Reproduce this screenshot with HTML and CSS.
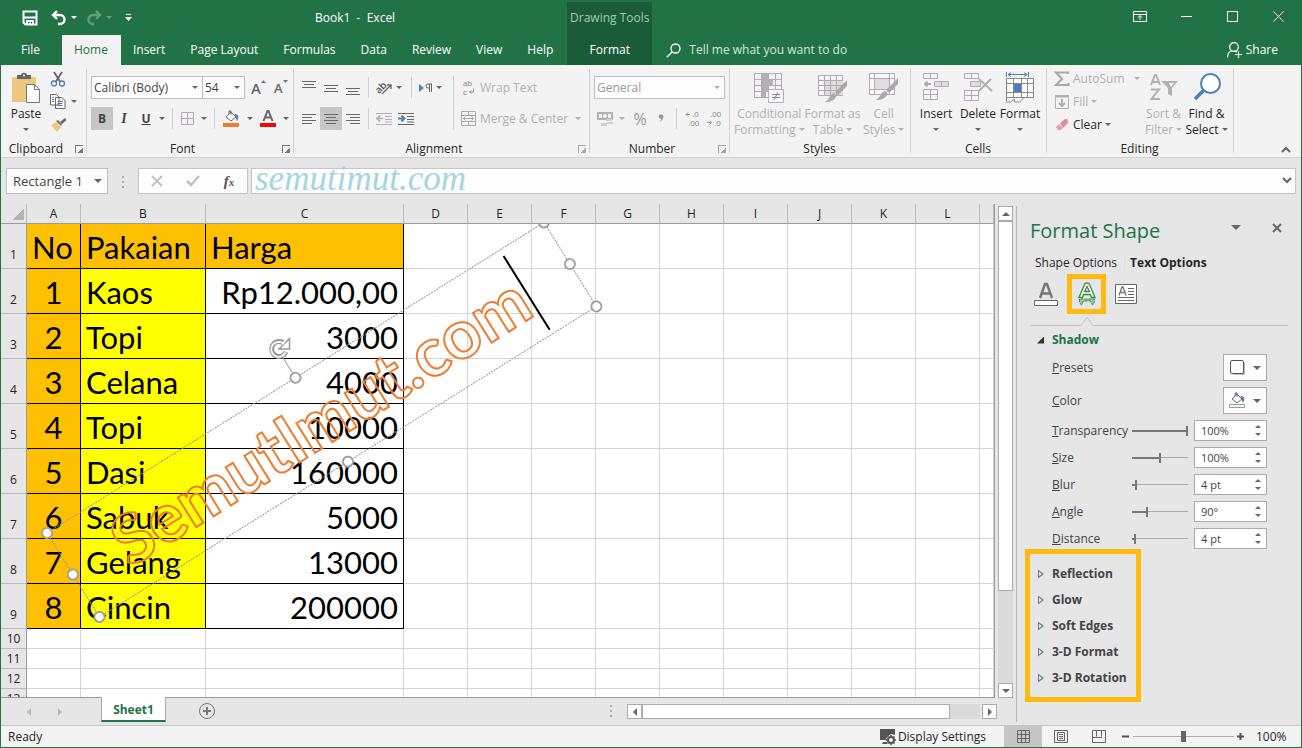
FILE: index.html
```html
<!DOCTYPE html>
<html lang="en">
<head>
  <meta charset="UTF-8" />
  <meta name="viewport" content="width=device-width, initial-scale=1.0" />
  <title>Book1 - Excel</title>
  <link rel="stylesheet" href="styles.css">
</head>
<body>
<div class="app">

  <!-- Title bar and ribbon tabs -->
  <header class="top">
    <div class="quick">
      <button aria-label="Save"><svg width="16" height="16"><path d="M1.500 1.500h13v13h-11l-2-2z" fill="none" stroke="#fff" stroke-width="2"/><path d="M1 7.500h14M5 15v-4h6v4M8 12.500v2.500" fill="none" stroke="#fff" stroke-width="2"/></svg></button>
      <button class="undo" aria-label="Undo"><svg width="16" height="16"><path d="M6 1L2 5l4 4M2.500 5H9a4.500 4.500 0 0 1 0 9H7" fill="none" stroke="#fff" stroke-width="2.400"/></svg><i class="caret"></i></button>
      <button class="redo" aria-label="Redo"><svg width="16" height="16"><path d="M10 1l4 4-4 4M13.500 5H7a4.500 4.500 0 0 0 0 9h1" fill="none" stroke="#fff" stroke-width="2.400"/></svg><i class="caret"></i></button>
      <button aria-label="Customize toolbar"><svg width="7" height="8"><path d="M1 .5h5" stroke="#fff"/><path d="M0 3h7L3.500 7z" fill="#fff"/></svg></button>
    </div>
    <div class="title">Book1&nbsp; -&nbsp; Excel</div>
    <div class="window-buttons">
      <button aria-label="Ribbon display"><svg width="14" height="11"><path d="M.5.5h13v10H.5zM.5 3.500h13M7 9V5M5 6.500l2-2 2 2" fill="none" stroke="#fff"/></svg></button>
      <button aria-label="Minimize"><svg width="11" height="11"><path d="M0 5.500h11" stroke="#fff"/></svg></button>
      <button aria-label="Maximize"><svg width="11" height="11"><path d="M.5.5h10v10H.5z" fill="none" stroke="#fff"/></svg></button>
      <button aria-label="Close"><svg width="11" height="11"><path d="M.5.5l10 10M10.500.5l-10 10" stroke="#fff"/></svg></button>
    </div>
    <nav class="tabs">
      <a href="#" class="file">File</a>
      <a href="#" class="active">Home</a>
      <a href="#">Insert</a>
      <a href="#">Page Layout</a>
      <a href="#">Formulas</a>
      <a href="#">Data</a>
      <a href="#">Review</a>
      <a href="#">View</a>
      <a href="#">Help</a>
    </nav>
    <div class="context">
      <span>Drawing Tools</span>
      <a href="#">Format</a>
    </div>
    <button class="tell"><svg width="15" height="15"><circle cx="9.500" cy="5.500" r="4.500" fill="none" stroke="#fff" stroke-width="1.300"/><path d="M6.500 8.500L.8 14.200" stroke="#fff" stroke-width="1.300"/></svg>Tell me what you want to do</button>
    <button class="share"><svg width="15" height="16"><circle cx="7" cy="5" r="4.300" fill="none" stroke="#fff" stroke-width="1.200"/><path d="M.6 15.500c0-4 2-6.500 5-6.500M7 9c1 0 2 .3 3 1M11.500 9v7M8 12.500h7" fill="none" stroke="#fff" stroke-width="1.200"/></svg>Share</button>
  </header>

  <!-- Ribbon -->
  <section class="ribbon">
    <div class="group clipboard">
      <div class="tools big-row">
        <button class="big"><svg width="30" height="32"><path d="M1 5h24v25H1z" fill="#eec77e"/><path d="M6 3h4c0-3 6-3 6 0h4v4H6z" fill="#666"/><circle cx="13" cy="3.500" r="1" fill="#fff"/><path d="M15.500 12.500h8l5 5v13h-13z" fill="#fff" stroke="#777"/><path d="M23.500 12.500v5h5" fill="none" stroke="#777"/></svg><span>Paste</span><i class="caret"></i></button>
        <div class="stack">
          <button aria-label="Cut"><svg width="16" height="16"><path d="M4 1l6 9.500M12 1L6 10.500" stroke="#666" stroke-width="1.800"/><circle cx="4" cy="12.500" r="2.500" fill="none" stroke="#4a80bd" stroke-width="1.300"/><circle cx="12" cy="12.500" r="2.500" fill="none" stroke="#4a80bd" stroke-width="1.300"/></svg></button>
          <button aria-label="Copy"><svg width="16" height="15"><path d="M.5.5h6l2.500 2.500v8H.5zM5.500 3.500h6l3.500 3v8H5.500z" fill="#fff" stroke="#666"/><path d="M2 3.500h2M2 5.500h2M2 7.500h2M7.500 7.500h5M7.500 9.500h5M7.500 11.500h5" stroke="#4a80bd"/></svg><i class="caret"></i></button>
          <button aria-label="Format Painter"><svg width="17" height="15"><path d="M1 8l5-3 5 5-4 5z" fill="#eec77e"/><path d="M6 4l2-1 4 4-1 2z" fill="#777"/><path d="M10 5l5-4 1.500 2L12 7z" fill="#666"/></svg></button>
        </div>
      </div>
      <div class="name">Clipboard<button class="launch" aria-label="Clipboard options"></button></div>
    </div>

    <div class="group font">
      <div class="tools">
        <div class="row">
          <label class="drop font-name"><select aria-label="Font"><option>Calibri (Body)</option></select></label>
          <label class="drop font-size"><select aria-label="Font size"><option>54</option></select></label>
          <button class="letter grow" aria-label="Increase font size">A<svg width="5" height="3"><path d="M0 3l2.500-3L5 3z" fill="#4a80bd"/></svg></button>
          <button class="letter shrink" aria-label="Decrease font size">A<svg width="5" height="3"><path d="M0 0h5L2.500 3z" fill="#4a80bd"/></svg></button>
        </div>
        <div class="row">
          <button class="sq on"><b>B</b></button>
          <button class="sq italic"><i>I</i></button>
          <button class="sq"><u>U</u></button>
          <i class="caret"></i>
          <span class="sep"></span>
          <button class="ico" aria-label="Borders"><svg width="13" height="13"><path d="M.5.5h12v12H.5zM6.500 0v13M0 6.500h13" fill="none" stroke="#b3aab3"/></svg></button>
          <i class="caret"></i>
          <span class="sep"></span>
          <button class="ico" aria-label="Fill color"><svg width="17" height="17"><path d="M3 7l5-5 5 5-5 4z" fill="#fff" stroke="#666"/><path d="M6 4V1h2v4" fill="none" stroke="#666"/><path d="M12 4c4 0 4 4 2 7-1-2-1-4-2-5z" fill="#4a80bd"/><path d="M0 13h16v4H0z" fill="#ed7d31"/></svg></button>
          <i class="caret"></i>
          <button class="ico" aria-label="Font color"><svg width="16" height="17"><path d="M3.500 11L7.500 1h1L12.500 11M5 7.500h6" fill="none" stroke="#666" stroke-width="2"/><path d="M0 13h16v4H0z" fill="#f00"/></svg></button>
          <i class="caret"></i>
        </div>
      </div>
      <div class="name">Font<button class="launch" aria-label="Font options"></button></div>
    </div>

    <div class="group alignment">
      <div class="tools split">
        <div class="half">
          <div class="row">
            <button class="sq" aria-label="Top align"><svg width="14" height="14"><path d="M0 .5h14M2 3.500h10M0 6.500h14" stroke="#666"/></svg></button>
            <button class="sq" aria-label="Middle align"><svg width="14" height="14"><path d="M0 4.500h14M2 7.500h10M0 10.500h14" stroke="#666"/></svg></button>
            <button class="sq" aria-label="Bottom align"><svg width="14" height="14"><path d="M0 7.500h14M2 10.500h10M0 13.500h14" stroke="#666"/></svg></button>
            <span class="sep"></span>
            <button class="ico orient" aria-label="Orientation"><svg width="17" height="15"><text x="-1" y="11" transform="rotate(-45 5 8)">ab</text><path d="M6 14L15 5M11 5h4v4" fill="none" stroke="#666" stroke-width="1.300"/></svg></button>
            <i class="caret"></i>
            <span class="sep"></span>
            <button class="ico" aria-label="Text direction"><svg width="14" height="10"><path d="M0 1l5 4-5 4z" fill="#4a80bd"/><path d="M13 1H9a2 2 0 0 0 0 4h1M10.500 1v8M12.500 1v8" fill="none" stroke="#666"/></svg></button>
            <i class="caret"></i>
          </div>
          <div class="row">
            <button class="sq" aria-label="Align left"><svg width="14" height="14"><path d="M0 2.500h14M0 5.500h10M0 8.500h14M0 11.500h10" stroke="#666"/></svg></button>
            <button class="sq on" aria-label="Center"><svg width="14" height="14"><path d="M0 2.500h14M2 5.500h10M0 8.500h14M2 11.500h10" stroke="#666"/></svg></button>
            <button class="sq" aria-label="Align right"><svg width="14" height="14"><path d="M0 2.500h14M4 5.500h10M0 8.500h14M4 11.500h10" stroke="#666"/></svg></button>
            <span class="sep"></span>
            <button class="ico" aria-label="Decrease indent"><svg width="16" height="14"><path d="M0 1.500h16M9 4.500h7M9 7.500h7M0 12.500h16M9 10h7" stroke="#b1b1b1"/><path d="M7 6.500H1M4 3.500l-3 3 3 3" fill="none" stroke="#b1b1b1" stroke-width="1.600"/></svg></button>
            <button class="ico" aria-label="Increase indent"><svg width="16" height="14"><path d="M0 1.500h16M9 4.500h7M9 7.500h7M0 12.500h16M9 10h7" stroke="#666"/><path d="M0 6.500h6M3.500 3.500l3 3-3 3" fill="none" stroke="#4a80bd" stroke-width="1.800"/></svg></button>
          </div>
        </div>
        <span class="sep tall"></span>
        <div class="half off">
          <div class="row"><button class="line"><svg width="15" height="17" class="small-text"><text x="2" y="7" class="wrap">ab</text><text x="2" y="16" class="wrap">c</text><path d="M12.500 9.500v3.500H8.500M10.500 11.500l-2 1.500 2 1.500" fill="none" stroke="#999"/></svg>Wrap Text</button></div>
          <div class="row"><button class="line"><svg width="15" height="15"><path d="M.5.5h14v14H.5zM0 4.500h15M0 10.500h15M7.500 0v4M7.500 11v4M2 7.500h11M4.500 5.500l-2 2 2 2M10.500 5.500l2 2-2 2" fill="none" stroke="#aaa"/></svg>Merge &amp; Center</button><i class="caret"></i></div>
        </div>
      </div>
      <div class="name">Alignment<button class="launch faint" aria-label="Alignment options"></button></div>
    </div>

    <div class="group number">
      <div class="tools off">
        <div class="row"><label class="drop format"><select aria-label="Number format"><option>General</option></select></label></div>
        <div class="row">
          <button class="ico" aria-label="Accounting format"><svg width="17" height="16"><path d="M0 1h16v8H0z" fill="#b1b1b1"/><path d="M2 3h3v4H2zM11 3h3v4h-3z" fill="#f3f3f3"/><circle cx="8" cy="5" r="2" fill="#f3f3f3"/><path d="M9 8h6v2H9zM10 11h6v2h-6zM4 12h6v3H4z" fill="#d0d0d0"/></svg></button>
          <i class="caret"></i>
          <button class="sign">%</button>
          <button class="sign comma" aria-label="Comma style"><svg width="6" height="9"><circle cx="3" cy="2.500" r="2.300" fill="#999"/><path d="M5.300 2c0 3-1 5-4 6 1-1 2-2 2-4z" fill="#999"/></svg></button>
          <span class="sep"></span>
          <button class="dec" aria-label="Increase decimal"><svg width="16" height="15" class="small-text"><path d="M5 3.500H1M3 1.500l-2 2 2 2" fill="none" stroke="#999"/><text x="7" y="6">.0</text><text x="3" y="15">.00</text></svg></button>
          <button class="dec" aria-label="Decrease decimal"><svg width="16" height="15" class="small-text"><text x="3" y="6">.00</text><path d="M0 11.500h4M2.500 9.500l2 2-2 2" fill="none" stroke="#999"/><text x="7" y="15">.0</text></svg></button>
        </div>
      </div>
      <div class="name">Number<button class="launch faint" aria-label="Number options"></button></div>
    </div>

    <div class="group styles">
      <div class="tools big-row off">
        <button class="big"><svg width="30" height="32"><path d="M.5 1.500h27v24H.5zM0 7.500h28M0 13.500h28M0 19.500h28M7.500 1v25M14.500 1v25M21.500 1v25" fill="none" stroke="#b3aab3"/><path d="M8 2h6v5H8zM8 8h11v5H8zM8 14h6v5H8zM8 20h4v5H8z" fill="#b1b1b1"/><path d="M14.500 17.500h15v13h-15z" fill="#fdf8fd" stroke="#b1b1b1"/><path d="M18 22.500h8M18 25.500h8M24 20l-4 8" stroke="#888"/></svg><span>Conditional<br>Formatting<i class="caret"></i></span></button>
        <button class="big"><svg width="30" height="32"><path d="M.5 3.500h24v20H.5z" fill="#faf5fa" stroke="#b3aab3"/><path d="M7 8h18v15H7z" fill="#ddd"/><path d="M0 8.500h25M0 13.500h25M0 18.500h25M6.500 3v20M12.500 3v20M18.500 3v20" fill="none" stroke="#b3aab3"/><path d="M29 8v6l-9 9-3-3zM16 21c4 1 3 9-9 9 4-2 5-8 9-9z" fill="#aaa"/></svg><span>Format as<br>Table<i class="caret"></i></span></button>
        <button class="big"><svg width="30" height="32"><path d="M.5 1.500h25v21H.5z" fill="#faf5fa" stroke="#b3aab3"/><path d="M6 7h15v10H6z" fill="#ddd"/><path d="M0 6.500h25M0 17.500h25M5.500 1v21M20.500 1v21" fill="none" stroke="#b3aab3"/><path d="M29 6v6l-9 9-3-3zM16 19c4 1 3 9-9 9 4-2 5-8 9-9z" fill="#aaa"/></svg><span>Cell<br>Styles<i class="caret"></i></span></button>
      </div>
      <div class="name">Styles</div>
    </div>

    <div class="group cells">
      <div class="tools big-row">
        <button class="big"><svg width="28" height="32"><path d="M1.500 1.500h14v5h-14zM8.500 1v5M1.500 17.500h14v10h-14zM8.500 17v10M1 22.500h14" fill="#f8f3f8" stroke="#b3aab3"/><path d="M12.500 9.500h14v5h-14zM19.500 9v5" fill="#ddd" stroke="#b3aab3"/><path d="M9 12H3M5.500 9.500L3 12l2.500 2.500" fill="none" stroke="#aaa" stroke-width="1.800"/></svg><span>Insert</span><i class="caret"></i></button>
        <button class="big"><svg width="32" height="32"><path d="M2.500 1.500h14v5h-14zM9.500 1v5M2.500 18.500h14v10h-14zM9.500 18v10M2 23.500h14" fill="#f8f3f8" stroke="#b3aab3"/><path d="M8.500 9.500h10v5h-10z" fill="#ddd" stroke="#b3aab3"/><path d="M17 7l13 12M29 7L17 19" stroke="#b1b1b1" stroke-width="2"/></svg><span>Delete</span><i class="caret"></i></button>
        <button class="big"><svg width="30" height="32"><path d="M1.500 0v5M23.500 0v5M3 2.500h19M6 .5l-3 2 3 2M19 .5l3 2-3 2" fill="none" stroke="#4a80bd"/><path d="M1.500 6.500h27v19h-27zM1.500 25v5h4l4-3v3h5l4-4M1 11.500h27M1 20.500h27M8.500 6v19M16.500 6v19M22.500 6v19" fill="#fff" stroke="#888"/><path d="M9 12h7v8H9z" fill="#4a80bd"/></svg><span>Format</span><i class="caret"></i></button>
      </div>
      <div class="name">Cells</div>
    </div>

    <div class="group editing">
      <div class="tools big-row">
        <div class="stack wide">
          <button class="off"><svg width="16" height="16"><path d="M14 3V1.500H2L8 8l-6 6h12.500V12" fill="none" stroke="#aaa" stroke-width="2.200"/></svg>AutoSum<i class="caret far"></i></button>
          <button class="off"><svg width="16" height="16"><path d="M1.500 1.500h13v13h-13z" fill="none" stroke="#b1b1b1"/><path d="M1 2.500h14" stroke="#b1b1b1" stroke-width="2"/><path d="M8 5v7M5 9l3 3 3-3" fill="none" stroke="#aaa" stroke-width="1.800"/></svg>Fill<i class="caret"></i></button>
          <button><svg width="16" height="16"><path d="M6 6l5-4h2l1 3v1L9 11z" fill="#e78898"/><path d="M5 7l4 4-2 2-3 .5L2 10z" fill="#ec9dab"/></svg>Clear<i class="caret"></i></button>
        </div>
        <button class="big off"><svg width="30" height="32"><path d="M2 13L6 3h1l4 10M3.500 10h6M2 17.500h8L2.500 27H11" fill="none" stroke="#b1b1b1" stroke-width="2"/><path d="M12 9h17l-6 7v8l-4-2v-6z" fill="#b1b1b1"/><path d="M20 11h5l-3 4z" fill="#f3f3f3"/></svg><span>Sort &amp;<br>Filter<i class="caret"></i></span></button>
        <button class="big"><svg width="28" height="32"><circle cx="17.500" cy="11.500" r="9.500" fill="#fff" stroke="#4a80bd" stroke-width="2"/><path d="M10.500 18.500L2 27" stroke="#4a80bd" stroke-width="3.500"/></svg><span>Find &amp;<br>Select<i class="caret"></i></span></button>
      </div>
      <div class="name">Editing</div>
    </div>
    <button class="collapse" aria-label="Collapse ribbon"><svg width="10" height="7"><path d="M1 6l4-4 4 4" fill="none" stroke="#666" stroke-width="2"/></svg></button>
  </section>

  <!-- Formula bar -->
  <section class="formula">
    <label class="drop name-box"><select aria-label="Name box"><option>Rectangle 1</option></select></label>
    <span class="dots"></span>
    <div class="fx">
      <button aria-label="Cancel"><svg width="12" height="12"><path d="M1 1l10 10M11 1L1 11" stroke="#c0c0c0" stroke-width="1.800"/></svg></button>
      <button aria-label="Enter"><svg width="14" height="12"><path d="M1 6l4 4 8-9" fill="none" stroke="#c0c0c0" stroke-width="2.500"/></svg></button>
      <button class="fn"><i>f<small>x</small></i></button>
    </div>
    <div class="entry">
      <input type="text" aria-label="Formula bar">
      <span class="watermark">semutimut.com</span>
      <svg width="10" height="8"><path d="M1 1l4 4 4-4" fill="none" stroke="#666" stroke-width="2.200"/></svg>
    </div>
  </section>

  <main class="work">
    <div class="book">
      <div class="sheet-row">
        <div class="sheet">
          <table>
            <colgroup><col class="c-head"><col class="c-a"><col class="c-b"><col class="c-c"><col class="c-std"><col class="c-std"><col class="c-std"><col class="c-std"><col class="c-std"><col class="c-std"><col class="c-std"><col class="c-std"><col class="c-std"><col></colgroup>
            <thead>
              <tr><th class="corner"></th><th>A</th><th>B</th><th>C</th><th>D</th><th>E</th><th>F</th><th>G</th><th>H</th><th>I</th><th>J</th><th>K</th><th>L</th><th></th></tr>
            </thead>
            <tbody>
              <tr class="data head"><th>1</th><td>No</td><td>Pakaian</td><td>Harga</td><td></td><td></td><td></td><td></td><td></td><td></td><td></td><td></td><td></td><td></td></tr>
              <tr class="data"><th>2</th><td>1</td><td>Kaos</td><td>Rp12.000,00</td><td></td><td></td><td></td><td></td><td></td><td></td><td></td><td></td><td></td><td></td></tr>
              <tr class="data"><th>3</th><td>2</td><td>Topi</td><td>3000</td><td></td><td></td><td></td><td></td><td></td><td></td><td></td><td></td><td></td><td></td></tr>
              <tr class="data"><th>4</th><td>3</td><td>Celana</td><td>4000</td><td></td><td></td><td></td><td></td><td></td><td></td><td></td><td></td><td></td><td></td></tr>
              <tr class="data"><th>5</th><td>4</td><td>Topi</td><td>10000</td><td></td><td></td><td></td><td></td><td></td><td></td><td></td><td></td><td></td><td></td></tr>
              <tr class="data"><th>6</th><td>5</td><td>Dasi</td><td>160000</td><td></td><td></td><td></td><td></td><td></td><td></td><td></td><td></td><td></td><td></td></tr>
              <tr class="data"><th>7</th><td>6</td><td>Sabuk</td><td>5000</td><td></td><td></td><td></td><td></td><td></td><td></td><td></td><td></td><td></td><td></td></tr>
              <tr class="data"><th>8</th><td>7</td><td>Gelang</td><td>13000</td><td></td><td></td><td></td><td></td><td></td><td></td><td></td><td></td><td></td><td></td></tr>
              <tr class="data"><th>9</th><td>8</td><td>Cincin</td><td>200000</td><td></td><td></td><td></td><td></td><td></td><td></td><td></td><td></td><td></td><td></td></tr>
              <tr><th>10</th><td></td><td></td><td></td><td></td><td></td><td></td><td></td><td></td><td></td><td></td><td></td><td></td><td></td></tr>
              <tr><th>11</th><td></td><td></td><td></td><td></td><td></td><td></td><td></td><td></td><td></td><td></td><td></td><td></td><td></td></tr>
              <tr><th>12</th><td></td><td></td><td></td><td></td><td></td><td></td><td></td><td></td><td></td><td></td><td></td><td></td><td></td></tr>
              <tr><th>13</th><td></td><td></td><td></td><td></td><td></td><td></td><td></td><td></td><td></td><td></td><td></td><td></td><td></td></tr>
            </tbody>
          </table>

          <!-- Rotated text box with its handles -->
          <svg class="shape" width="600" height="420">
            <g transform="translate(20 309) rotate(-32)">
              <rect x="0" y="0" width="586" height="99" class="outline"/>
              <text x="52" y="74">SemutImut.com</text>
              <path d="M534 7v87" stroke="#000" stroke-width="2"/>
              <path d="M293 0v-26" stroke="#a0a0a0"/>
              <g class="handles">
                <circle cx="0" cy="0" r="5"/><circle cx="293" cy="0" r="5"/><circle cx="586" cy="0" r="5"/>
                <circle cx="0" cy="49" r="5"/><circle cx="586" cy="49" r="5"/>
                <circle cx="0" cy="99" r="5"/><circle cx="293" cy="99" r="5"/><circle cx="586" cy="99" r="5"/>
              </g>
            </g>
            <path d="M259 128A7.500 7.500 0 1 1 256 118.500" fill="none" stroke="#999" stroke-width="5"/>
            <path d="M262.500 114.500v10.500h-10.500z" fill="#fff" stroke="#999" stroke-width="1.500"/>
            <path d="M258.500 128.500A7.500 7.500 0 1 1 257 120" fill="none" stroke="#fff" stroke-width="1.800"/>
          </svg>
        </div>
        <div class="vscroll">
          <button aria-label="Scroll up"><i class="tri up"></i></button>
          <div class="track"><div class="thumb"></div></div>
          <button aria-label="Scroll down"><i class="tri down"></i></button>
        </div>
      </div>
      <div class="sheet-tabs">
        <div class="arrows"><button aria-label="Previous sheet"><i class="tri left"></i></button><button aria-label="Next sheet"><i class="tri right"></i></button></div>
        <a href="#" class="sheet-tab">Sheet1</a>
        <button class="add" aria-label="New sheet"><svg width="16" height="16"><circle cx="8" cy="8" r="7.500" fill="none" stroke="#777"/><path d="M8 4v8M4 8h8" stroke="#777" stroke-width="2"/></svg></button>
        <span class="dots"></span>
        <div class="hscroll">
          <button aria-label="Scroll left"><i class="tri left"></i></button>
          <div class="track"><div class="thumb"></div></div>
          <button aria-label="Scroll right"><i class="tri right"></i></button>
        </div>
      </div>
    </div>

    <!-- Format Shape pane -->
    <aside class="pane">
      <div class="pane-title">
        <h2>Format Shape</h2>
        <button aria-label="Pane options"><i class="tri down wide-tri"></i></button>
        <button aria-label="Close pane"><svg width="10" height="10"><path d="M1 1l8 8M9 1L1 9" stroke="#666" stroke-width="2"/></svg></button>
      </div>
      <div class="pane-tabs"><a href="#">Shape Options</a><a href="#" class="active">Text Options</a></div>
      <div class="pane-icons">
        <button aria-label="Text fill and outline"><svg width="24" height="24"><path d="M6 16l5-14h2l5 14M8 11.500h8" fill="none" stroke="#777" stroke-width="2.400"/><path d="M.5 18.500h23v5H.5z" fill="#fff" stroke="#666"/></svg></button>
        <button class="marked" aria-label="Text effects"><svg width="18" height="24"><path d="M1 15.500L6.500 2.500q.5-1.500 2.500-1.500t2.500 1.500L17 15.500h-3.500l-1-3h-7l-1 3zM6.500 9.500h5L9 4.500z" fill="#fff" stroke="#3b8a3f" stroke-width="1.300"/><path d="M1.500 17c0 3 0 4 2 6l2-4h7l2 4c2-2 2-3 2-6z" fill="#9ec79f" stroke="#3b8a3f" stroke-dasharray="3 1"/></svg></button>
        <button aria-label="Text box"><svg width="22" height="20"><path d="M.5.5h21v19H.5z" fill="#fff" stroke="#666"/><path d="M4 11.500L7 3h1l3 8.500M5 8.500h5" fill="none" stroke="#777" stroke-width="1.400"/><path d="M13 4.500h6M13 7.500h6M13 10.500h6M3 13.500h16M3 16.500h16" stroke="#666"/></svg></button>
      </div>
      <svg class="notch" width="100%" height="10"><path d="M0 9.500h51l6-8 6 8h195" fill="none" stroke="#c3c3c3"/></svg>
      <button class="section open"><i></i>Shadow</button>
      <div class="fields">
        <div class="pick"><span><u>P</u>resets</span><button aria-label="Presets"><svg width="18" height="18"><path d="M4 4h12v12H4z" fill="#bbb"/><rect x="1.500" y="1.500" width="13" height="13" rx="1.500" fill="#fff" stroke="#555"/></svg><i class="caret"></i></button></div>
        <div class="pick"><span><u>C</u>olor</span><button aria-label="Color"><svg width="18" height="17"><path d="M3 7l5-5 5 5-5 4z" fill="#fff" stroke="#666"/><path d="M6 4V1h2v4" fill="none" stroke="#666"/><path d="M12 4c4 0 4 4 2 7-1-2-1-4-2-5z" fill="#4a80bd"/><path d="M.5 12.500h15v3H.5z" fill="#fff" stroke="#999"/></svg><i class="caret"></i></button></div>
        <div class="field"><label for="transparency"><u>T</u>ransparency</label><input type="range" aria-label="Transparency slider" value="100" style="--v: 100%"><span class="spin"><input id="transparency" type="text" value="100%"><i class="tri up"></i><i class="tri down"></i></span></div>
        <div class="field"><label for="size"><u>S</u>ize</label><input type="range" aria-label="Size slider" value="50" style="--v: 50%"><span class="spin"><input id="size" type="text" value="100%"><i class="tri up"></i><i class="tri down"></i></span></div>
        <div class="field"><label for="blur"><u>B</u>lur</label><input type="range" aria-label="Blur slider" value="5" style="--v: 5%"><span class="spin"><input id="blur" type="text" value="4 pt"><i class="tri up"></i><i class="tri down"></i></span></div>
        <div class="field"><label for="angle"><u>A</u>ngle</label><input type="range" aria-label="Angle slider" value="26" style="--v: 26%"><span class="spin"><input id="angle" type="text" value="90°"><i class="tri up"></i><i class="tri down"></i></span></div>
        <div class="field"><label for="distance"><u>D</u>istance</label><input type="range" aria-label="Distance slider" value="4" style="--v: 4%"><span class="spin"><input id="distance" type="text" value="4 pt"><i class="tri up"></i><i class="tri down"></i></span></div>
      </div>
      <div class="more">
        <button class="section"><i></i>Reflection</button>
        <button class="section"><i></i>Glow</button>
        <button class="section"><i></i>Soft Edges</button>
        <button class="section"><i></i>3-D Format</button>
        <button class="section"><i></i>3-D Rotation</button>
      </div>
    </aside>
  </main>

  <!-- Status bar -->
  <footer class="status">
    <span class="ready">Ready</span>
    <button class="display"><svg width="16" height="16"><path d="M0 0h15v6l-4-1-4 3-1 3H0zM3 13h4v2H2z" fill="#555"/><circle cx="11" cy="11" r="3" fill="none" stroke="#555" stroke-width="2"/><path d="M11 6v2M11 14v2M6 11h2M14 11h2M7.500 7.500l1.500 1.500M13 13l1.500 1.500M14.500 7.500L13 9M9 13l-1.500 1.500" stroke="#555" stroke-width="1.500"/></svg>Display Settings</button>
    <button class="view on" aria-label="Normal"><svg width="13" height="13"><path d="M.5.5h12v12H.5zM0 4.500h13M0 8.500h13M4.500 0v13M8.500 0v13" fill="none" stroke="#666"/></svg></button>
    <button class="view" aria-label="Page layout"><svg width="14" height="13"><path d="M.5.5h13v12H.5zM3.500 2.500h7v8h-7zM5 4.500h4M5 6.500h4M5 8.500h4" fill="none" stroke="#666"/></svg></button>
    <button class="view" aria-label="Page break preview"><svg width="14" height="13"><path d="M.5.5h13v12H.5zM4.500 0v6.500M9.500 0v6.500M0 7.500h10" fill="none" stroke="#666"/></svg></button>
    <button class="zoom-button" aria-label="Zoom out"><svg width="7" height="7"><path d="M0 3.500h7" stroke="#555" stroke-width="2"/></svg></button>
    <input class="zoom" type="range" value="50" aria-label="Zoom">
    <button class="zoom-button" aria-label="Zoom in"><svg width="7" height="7"><path d="M0 3.500h7M3.500 0v7" stroke="#555" stroke-width="2"/></svg></button>
    <span class="percent">100%</span>
  </footer>
</div>
</body>
</html>
```

FILE: styles.css
```css
:root {
  --green: #217346;
  --dark-green: #1b5c38;
  --gray: #e6e6e6;
  --light: #f3f3f3;
  --line: #c6c6c6;
  --mark: #ffb90f;
}

* {
  margin: 0;
  padding: 0;
  box-sizing: border-box;
}

body {
  font: 12px/16px "Open Sans", "Noto Sans", sans-serif;
  color: #262626;
}

button {
  display: flex;
  align-items: center;
  justify-content: center;
  font: inherit;
  color: inherit;
  background: none;
  border: none;
}

select, input {
  font: inherit;
  color: inherit;
  border: none;
  background: none;
  appearance: none;
}

a {
  color: inherit;
  text-decoration: none;
}

svg {
  display: block;
  flex: none;
}

.app {
  display: flex;
  flex-direction: column;
  height: 100vh;
  overflow: hidden;
  border: 1px solid var(--green);
  border-top: none;
  background: var(--gray);
}

/* small triangles */
.caret {
  flex: none;
  border: 3px solid transparent;
  border-top-color: #666;
  border-bottom: none;
}

.tri {
  flex: none;
  border: 4px solid transparent;
}

.tri.up {
  border-top: none;
  border-bottom-color: #666;
}

.tri.down {
  border-bottom: none;
  border-top-color: #666;
}

.tri.left {
  border-left: none;
  border-right-color: #666;
}

.tri.right {
  border-right: none;
  border-left-color: #666;
}

.tri.wide-tri {
  border-width: 5px 5px 0;
}

.off {
  color: #b1b1b1;
}

.off .caret {
  border-top-color: #b1b1b1;
}

/* === TITLE BAR === */
.top {
  display: grid;
  grid-template-columns: auto auto 1fr auto;
  grid-template-rows: 35px 30px;
  position: relative;
  background: var(--green);
  color: #fff;
}

.quick {
  grid-area: 1 / 1;
  display: flex;
  align-items: center;
  padding-left: 21px;
}

.quick .caret {
  border-top-color: #fff;
  margin-left: 4px;
}

.quick .undo {
  margin: 0 9px 0 13px;
}

.quick .redo {
  margin-right: 13px;
  opacity: 0.3;
}

.title {
  position: absolute;
  top: 10px;
  left: 314px;
}

.window-buttons {
  grid-area: 1 / 4;
  display: flex;
}

.window-buttons button {
  width: 46px;
  height: 32px;
}

.tabs {
  grid-area: 2 / 1;
  display: flex;
}

.tabs a {
  padding: 7px 13px 7px 12px;
}

.tabs .file {
  padding: 7px 22px 7px 20px;
}

.tabs .active {
  background: var(--light);
  color: var(--green);
}

.context {
  grid-area: 1 / 2 / 3 / 3;
  width: 85px;
  margin: 2px 0 0 1px;
  background: var(--dark-green);
  text-align: center;
  white-space: nowrap;
}

.context span {
  display: block;
  padding: 8px 0 7px;
  color: #9fcdb3;
}

.context a {
  display: block;
  padding: 9px 0;
}

.tell {
  grid-area: 2 / 3;
  justify-self: start;
  gap: 8px;
  padding-left: 14px;
  color: #d3e8dc;
}

.share {
  grid-area: 2 / 4;
  justify-self: end;
  gap: 4px;
  padding-right: 23px;
}

/* === RIBBON === */
.ribbon {
  display: flex;
  height: 93px;
  background: var(--light);
  border-bottom: 1px solid #d2d2d2;
}

.group {
  display: flex;
  flex-direction: column;
  position: relative;
  flex: none;
}

.group::after {
  content: "";
  position: absolute;
  right: 0;
  top: 4px;
  width: 1px;
  height: 84px;
  background: #d2d2d2;
}

.clipboard { width: 86px; }
.font { width: 207px; }
.alignment { width: 296px; }
.number { width: 140px; }
.styles { width: 181px; }
.cells { width: 136px; }
.editing { width: 187px; }

.tools {
  display: flex;
  flex-direction: column;
  gap: 8px;
  height: 76px;
  padding: 11px 4px 0;
}

.name {
  display: flex;
  justify-content: center;
  padding-right: 16px;
  color: #262626;
}

.styles .name, .cells .name, .editing .name {
  padding-right: 2px;
}

.launch {
  position: absolute;
  right: 4px;
  bottom: 4px;
  width: 8px;
  height: 8px;
  border-top: 1px solid #777;
  border-left: 1px solid #777;
  background: linear-gradient(135deg, transparent 60%, #777 60%);
}

.launch.faint {
  opacity: 0.6;
}

.row {
  display: flex;
  align-items: center;
  height: 23px;
}

.sq {
  width: 22px;
  height: 23px;
}

.sq.on {
  background: #c6c6c6;
}

.sq b, .sq u {
  font-weight: 700;
  color: #444;
}

.sq i {
  font: italic bold 14px "Liberation Serif", serif;
  color: #444;
}

.sep {
  width: 1px;
  height: 21px;
  margin: 0 8px;
  background: #d2d2d2;
}

.sep.tall {
  height: 54px;
  margin: 0 6px 0 4px;
}

.ico + .caret {
  margin-left: 5px;
}

.font .ico + .caret {
  margin-left: 7px;
}

.sq + .caret {
  margin-left: 2px;
}

.caret + .ico {
  margin-left: 7px;
}

.ico + .ico {
  margin-left: 6px;
}

.font .sep {
  margin: 0 8px 0 7px;
}

.split .sep {
  margin: 0 7px 0 4px;
}

.split .caret + .sep {
  margin-left: 9px;
}

.split .sep.tall {
  margin: 0 7px 0 4px;
}

.split .ico + .caret {
  margin-left: 3px;
}

.drop {
  display: flex;
  align-items: center;
  height: 23px;
  border: 1px solid #c0c0c0;
  background: #fdfdfd;
  position: relative;
}

.drop::after {
  content: "";
  position: absolute;
  right: 4px;
  border: 3px solid transparent;
  border-top-color: #666;
  border-bottom: none;
}

.drop select {
  width: 100%;
  height: 100%;
  padding-left: 2px;
  color: #444;
}

.font-name { width: 112px; }

.font-size {
  width: 43px;
  margin-left: -1px;
}

.format { width: 131px; }

.format select { color: #999; }

.format::after { border-top-color: #b1b1b1; }

.letter {
  align-items: flex-start;
  color: #666;
  font-weight: 600;
}

.grow {
  font-size: 15px;
  margin-left: 6px;
}

.shrink {
  font-size: 13px;
  margin-left: 8px;
}

.split {
  flex-direction: row;
  gap: 0;
}

.half {
  display: flex;
  flex-direction: column;
  gap: 8px;
}

.split .half:first-child {
  width: 151px;
}

.orient svg, .small-text {
  overflow: visible;
}

.orient text {
  font-size: 10px;
  font-weight: 600;
  fill: #555;
}

.small-text text {
  font: 8px/8px "Liberation Sans", sans-serif;
  fill: #888;
}

.line {
  gap: 4px;
}

.line + .caret {
  margin-left: 7px;
}

.number .row + .row {
  padding-left: 3px;
}

.sign {
  width: 14px;
  margin-left: 8px;
  font-size: 16px;
  color: #999;
}

.comma {
  margin-left: 7px;
}

.dec + .dec {
  margin-left: 6px;
}

.big-row {
  flex-direction: row;
  align-items: flex-start;
  gap: 0;
  padding-top: 7px;
}

.big {
  flex-direction: column;
  line-height: 16px;
  white-space: nowrap;
}

.big span {
  margin-top: 2px;
}

.big > .caret {
  margin-top: 6px;
}

.big span .caret {
  display: inline-block;
  margin-left: 3px;
  vertical-align: 3px;
}

.clipboard .big {
  width: 42px;
}

.stack {
  display: flex;
  flex-direction: column;
  margin-top: -5px;
}

.stack button {
  justify-content: flex-start;
  height: 23px;
  gap: 3px;
}

.stack .caret {
  margin-left: 2px;
}

.stack.wide .caret {
  margin-left: 0;
}

.stack.wide .caret.far {
  margin-left: 6px;
}

.clipboard .stack {
  padding-left: 3px;
}

.styles .big {
  width: 50px;
}

.styles .big:first-child {
  width: 72px;
}

.styles .big:nth-child(2) {
  width: 56px;
}

.cells .big {
  width: 42px;
}

.editing .wide {
  width: 91px;
  padding-left: 3px;
}

.editing .big {
  width: 43px;
}

.collapse {
  margin: auto 10px 4px auto;
}

/* === FORMULA BAR === */
.formula {
  display: flex;
  padding: 10px 5px 10px;
  height: 46px;
}

.formula .drop {
  width: 102px;
  height: 26px;
  font-size: 13px;
}

.formula .drop::after {
  border-width: 4px 4px 0;
  right: 5px;
}

.formula .drop select {
  padding-left: 6px;
}

.dots {
  width: 2px;
  height: 12px;
  margin: 8px 14px 0 14px;
  background: repeating-linear-gradient(#aaa 0 2px, transparent 2px 5px);
}

.fx {
  display: flex;
  width: 110px;
  height: 26px;
  border: 1px solid var(--line);
  background: #fdfdfd;
}

.fx button {
  flex: 1;
}

.fn i {
  font: italic bold 15px "Liberation Serif", serif;
  color: #555;
}

.fn small {
  font-size: 11px;
}

.entry {
  display: flex;
  align-items: center;
  flex: 1;
  height: 26px;
  margin-left: 3px;
  padding-right: 3px;
  border: 1px solid var(--line);
  background: #fdfdfd;
  position: relative;
}

.entry input {
  flex: 1;
}

.watermark {
  position: absolute;
  left: 3px;
  top: -8px;
  font: italic 35px/36px "Liberation Serif", serif;
  color: #a5d5e5;
}

/* === SHEET === */
.work {
  display: flex;
  flex: 1;
  min-height: 0;
}

.book {
  display: flex;
  flex-direction: column;
  flex: 1;
  min-width: 0;
}

.sheet-row {
  display: flex;
  flex: 1;
  min-height: 0;
}

.sheet {
  flex: 1;
  min-width: 0;
  position: relative;
  overflow: hidden;
  border-right: 1px solid #9b9b9b;
  border-bottom: 1px solid #9b9b9b;
}

table {
  width: 100%;
  table-layout: fixed;
  border-collapse: separate;
  border-spacing: 0;
}

.c-head { width: 26px; }
.c-a { width: 54px; }
.c-b { width: 125px; }
.c-c { width: 198px; }
.c-std { width: 64px; }

th {
  background: var(--gray);
  font-weight: 400;
  color: #222;
  border-right: 1px solid #bbb;
  border-bottom: 1px solid #bbb;
}

thead th {
  height: 20px;
  line-height: 18px;
  border-bottom-color: #9b9b9b;
}

tbody th {
  height: 20px;
  line-height: 19px;
  vertical-align: bottom;
  border-right-color: #9b9b9b;
}

.corner {
  background: linear-gradient(135deg, transparent 50%, #b4b4b4 50%) 11px 4px / 12px 12px no-repeat var(--gray);
}

td {
  background: #fff;
  border-right: 1px solid #d4d4d4;
  border-bottom: 1px solid #d4d4d4;
}

.data th {
  height: 45px;
  padding-bottom: 4px;
}

.data td {
  font: 31px/40px Lato, sans-serif;
  color: #000;
  padding: 3px 5px 1px 5px;
  white-space: nowrap;
}

.data td:nth-child(-n+4) {
  border-color: #000;
}

.data td:nth-child(2) {
  background: #ffc000;
  text-align: center;
}

.data td:nth-child(3) {
  background: #ff0;
}

.data td:nth-child(4) {
  text-align: right;
}

.data.head td:nth-child(-n+4) {
  background: #ffc000;
  text-align: left;
}

.shape {
  position: absolute;
  left: 26px;
  top: 20px;
}

.shape text {
  font: bold 68px Lato, sans-serif;
  fill: none;
  stroke: #ed7d31;
  stroke-width: 2px;
}

.outline {
  fill: none;
  stroke: #999;
  stroke-dasharray: 2 1;
}

.handles circle {
  fill: #fff;
  stroke: #a0a0a0;
  stroke-width: 2px;
}

.vscroll {
  display: flex;
  flex-direction: column;
  width: 21px;
  padding: 2px 3px 0 3px;
}

.vscroll button, .hscroll button {
  flex: none;
  width: 15px;
  height: 15px;
  border: 1px solid #ababab;
  background: #fff;
}

.track {
  flex: 1;
  background: #dadada;
}

.thumb {
  border: 1px solid #ababab;
  background: #fff;
}

.vscroll .thumb {
  width: 15px;
  height: 80%;
}

.sheet-tabs {
  display: flex;
  height: 27px;
}

.arrows {
  display: flex;
  justify-content: space-between;
  width: 100px;
  padding: 0 39px 0 26px;
  opacity: 0.35;
}

.sheet-tab {
  height: 25px;
  width: 65px;
  margin-top: -1px;
  padding-top: 5px;
  text-align: center;
  font-weight: 700;
  color: var(--green);
  background: #fff;
  border: 1px solid #ababab;
  border-top: none;
  border-bottom: 2px solid var(--green);
  z-index: 1;
}

.add {
  margin-left: 33px;
  height: 26px;
}

.sheet-tabs .dots {
  margin: 7px 15px 0 auto;
}

.hscroll {
  display: flex;
  width: 370px;
  height: 15px;
  margin: 6px 19px 0 0;
}

.hscroll .track {
  margin-right: 2px;
}

.hscroll .thumb {
  width: 91%;
  height: 15px;
}

/* === FORMAT PANE === */
.pane {
  width: 285px;
  flex: none;
  margin: 2px 0 3px;
  border-left: 1px solid #b5b5b5;
  color: #444;
}

.pane-title {
  display: flex;
  align-items: center;
  gap: 31px;
  padding: 10px 19px 0 13px;
}

.pane-title h2 {
  flex: 1;
  font-size: 20px;
  line-height: 30px;
  font-weight: 400;
  color: var(--green);
}

.pane-title button {
  margin-top: -7px;
}

.pane-tabs {
  display: flex;
  padding: 9px 0 0 18px;
  color: #262626;
}

.pane-tabs .active {
  margin-left: 7px;
  padding-left: 5px;
  border-left: 1px solid #ddd;
  font-weight: 700;
}

.pane-icons {
  display: flex;
  align-items: center;
  gap: 9px;
  height: 40px;
  margin: 3px 0 0 17px;
}

.marked {
  width: 39px;
  height: 40px;
  border: 5px solid var(--mark);
}

.notch {
  width: auto;
  margin: 2px 14px 0 13px;
}

.section {
  justify-content: flex-start;
  width: 100%;
  height: 26px;
  font-weight: 700;
  color: #444;
}

.section i {
  width: 6px;
  height: 9px;
  margin-right: 8px;
  background: #777;
  clip-path: polygon(0 0, 100% 50%, 0 100%, 0 0, 1px 2px, 1px 7px, 4px 50%, 1px 2px);
}

.section.open {
  height: 28px;
  padding-left: 20px;
  color: var(--green);
}

.section.open i {
  width: 7px;
  height: 7px;
  background: #333;
  clip-path: polygon(100% 0, 100% 100%, 0 100%);
}

.fields {
  padding: 0 34px 0 35px;
}

.pick, .field {
  display: flex;
  align-items: center;
  height: 27px;
}

.pick {
  justify-content: space-between;
  margin-bottom: 6px;
}

.pick + .field {
  margin-top: -3px;
}

.pick button {
  width: 44px;
  height: 27px;
  gap: 6px;
  border: 1px solid #ababab;
  background: #fdfdfd;
}

.pick .caret {
  border-width: 4px 4px 0;
}

.field label {
  flex: 1;
}

.field input[type="range"] {
  width: 56px;
  height: 10px;
  margin-right: 6px;
  background:
    linear-gradient(#777, #777) 0 4px / var(--v) 2px no-repeat,
    linear-gradient(#ababab, #ababab) 0 4px / 100% 1px no-repeat;
}

input[type="range"]::-webkit-slider-thumb {
  appearance: none;
  width: 2px;
  height: 10px;
  background: #777;
}

.spin {
  display: grid;
  grid-template-columns: 1fr 16px;
  grid-template-rows: 1fr 1fr;
  align-items: center;
  justify-items: center;
  width: 73px;
  height: 21px;
  padding: 1px 0;
  border: 1px solid #ababab;
  background: #fff;
}

.spin input {
  grid-row: 1 / 3;
  width: 100%;
  padding-left: 6px;
  font-size: 11px;
}

.spin .tri {
  border-left-width: 3px;
  border-right-width: 3px;
}

.spin .up {
  border-bottom-width: 3px;
}

.spin .down {
  border-top-width: 3px;
}

.more {
  width: 116px;
  margin: -3px 0 0 8px;
  padding: 7px 0 6px 8px;
  border: 5px solid var(--mark);
}

/* === STATUS BAR === */
.status {
  display: flex;
  height: 22px;
  align-items: center;
  background: var(--light);
  border-top: 1px solid var(--line);
}

.ready {
  flex: 1;
  padding-left: 7px;
}

.display {
  gap: 2px;
  margin-right: 18px;
}

.view {
  width: 38px;
  height: 21px;
}

.view.on {
  background: #c6c6c6;
}

.zoom-button {
  width: 7px;
  margin-left: 4px;
}

.zoom {
  width: 101px;
  height: 11px;
  margin: 0 -1px 0 4px;
  background: linear-gradient(#ababab, #ababab) 0 5px / 100% 1px no-repeat;
}

input.zoom::-webkit-slider-thumb {
  width: 5px;
  height: 11px;
  background: #666;
}

.percent {
  width: 57px;
  padding-left: 12px;
}
```
